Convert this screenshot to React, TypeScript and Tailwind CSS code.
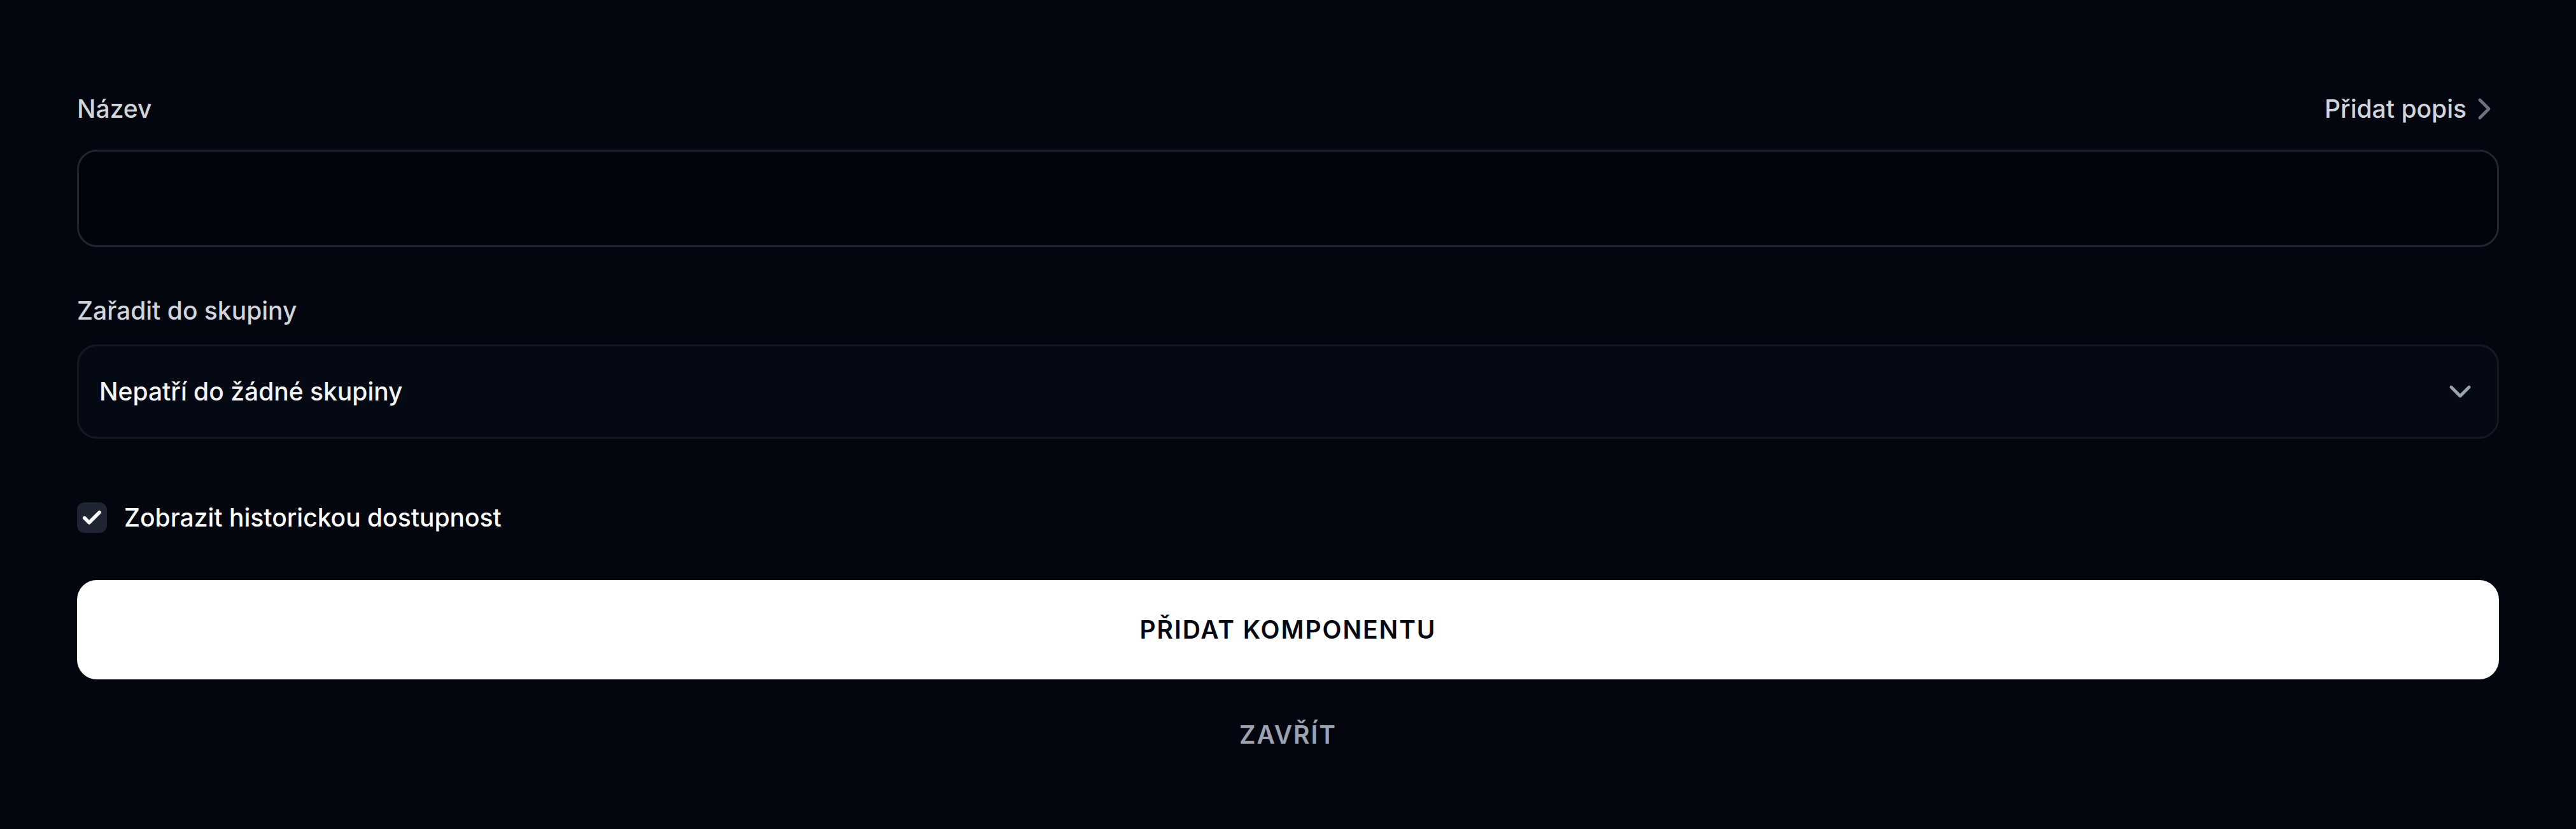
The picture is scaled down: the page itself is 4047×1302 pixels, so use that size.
import { useState } from "react";

function ChevronRight({ className }: { className?: string }) {
  return (
    <svg viewBox="0 0 24 24" fill="none" stroke="currentColor" strokeWidth={2.1} strokeLinecap="round" strokeLinejoin="round" className={className}>
      <path d="m9 18 6-6-6-6" />
    </svg>
  );
}

function ChevronDown({ className }: { className?: string }) {
  return (
    <svg viewBox="0 0 24 24" fill="none" stroke="currentColor" strokeWidth={2.1} strokeLinecap="round" strokeLinejoin="round" className={className}>
      <path d="m6 9 6 6 6-6" />
    </svg>
  );
}

export default function App() {
  const [checked, setChecked] = useState(true);
  const [name, setName] = useState("");

  return (
    <div className="min-h-[1302px] w-full bg-[#03060f] px-[121px] pt-[140px] font-['Inter',sans-serif] antialiased">
      <div className="flex h-[62px] items-center justify-between">
        <label htmlFor="component-name" className="text-[39px] font-medium leading-[62px] text-[#d1d5db]">
          Název
        </label>
        <button type="button" className="-mr-[5px] flex items-center gap-0 text-[39px] font-medium leading-[62px] text-[#d1d5db]">
          Přidat popis
          <ChevronRight className="h-[56px] w-[56px] text-[#6b7280]" />
        </button>
      </div>
      <input
        id="component-name"
        value={name}
        onChange={(event) => setName(event.target.value)}
        className="mt-[33px] block h-[153px] w-full rounded-[31px] border-[3px] border-[#1f2633] bg-[#02040c] px-[33px] text-[39px] text-white outline-none"
      />

      <div className="mt-[69px] text-[39px] font-medium leading-[62px] text-[#d1d5db]">Zařadit do skupiny</div>
      <button
        type="button"
        className="mt-[22px] flex h-[148px] w-full items-center justify-between rounded-[31px] border-[3px] border-[#131a26] bg-[#050913] pl-[32px] pr-[30px]"
      >
        <span className="text-[39px] font-medium leading-[62px] text-[#f3f4f6]">Nepatří do žádné skupiny</span>
        <ChevronDown className="h-[56px] w-[56px] text-[#9ca3af]" />
      </button>

      <label className="mt-[93px] flex h-[62px] cursor-pointer items-center gap-[27px]">
        <button
          type="button"
          onClick={() => setChecked(!checked)}
          className="flex h-[48px] w-[47px] items-center justify-center rounded-[12px] bg-[#1f2533]"
        >
          {checked ? (
            <svg viewBox="0 0 24 24" fill="none" stroke="white" strokeWidth={3.8} strokeLinecap="round" strokeLinejoin="round" className="h-[35px] w-[35px]">
              <path d="M20 6 9 17l-5-5" />
            </svg>
          ) : null}
        </button>
        <span className="text-[39px] font-medium leading-[62px] text-white">Zobrazit historickou dostupnost</span>
      </label>

      <button
        type="button"
        className="mt-[67px] flex h-[156px] w-full items-center justify-center rounded-[31px] bg-white text-[39px] font-semibold uppercase tracking-[0.05em] text-[#030712]"
      >
        Přidat komponentu
      </button>
      <div className="mt-[56px] flex justify-center">
        <button type="button" className="text-[39px] font-semibold uppercase leading-[62px] tracking-[0.05em] text-[#9ca3af]">
          Zavřít
        </button>
      </div>
    </div>
  );
}
